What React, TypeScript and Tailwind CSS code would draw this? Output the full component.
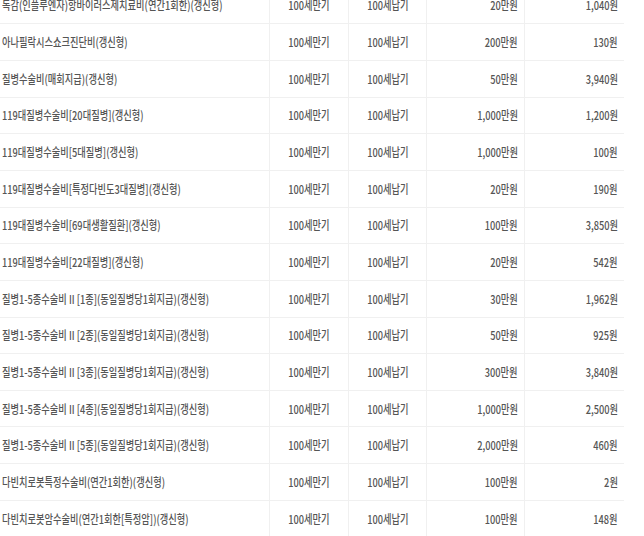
import React from "react";

type Row = [string, string, string, string, string];

const rows: Row[] = [
  ["독감(인플루엔자)항바이러스제치료비(연간1회한)(갱신형)", "100세만기", "100세납기", "20만원", "1,040원"],
  ["아나필락시스쇼크진단비(갱신형)", "100세만기", "100세납기", "200만원", "130원"],
  ["질병수술비(매회지급)(갱신형)", "100세만기", "100세납기", "50만원", "3,940원"],
  ["119대질병수술비[20대질병](갱신형)", "100세만기", "100세납기", "1,000만원", "1,200원"],
  ["119대질병수술비[5대질병](갱신형)", "100세만기", "100세납기", "1,000만원", "100원"],
  ["119대질병수술비[특정다빈도3대질병](갱신형)", "100세만기", "100세납기", "20만원", "190원"],
  ["119대질병수술비[69대생활질환](갱신형)", "100세만기", "100세납기", "100만원", "3,850원"],
  ["119대질병수술비[22대질병](갱신형)", "100세만기", "100세납기", "20만원", "542원"],
  ["질병1-5종수술비 II [1종](동일질병당1회지급)(갱신형)", "100세만기", "100세납기", "30만원", "1,962원"],
  ["질병1-5종수술비 II [2종](동일질병당1회지급)(갱신형)", "100세만기", "100세납기", "50만원", "925원"],
  ["질병1-5종수술비 II [3종](동일질병당1회지급)(갱신형)", "100세만기", "100세납기", "300만원", "3,840원"],
  ["질병1-5종수술비 II [4종](동일질병당1회지급)(갱신형)", "100세만기", "100세납기", "1,000만원", "2,500원"],
  ["질병1-5종수술비 II [5종](동일질병당1회지급)(갱신형)", "100세만기", "100세납기", "2,000만원", "460원"],
  ["다빈치로봇특정수술비(연간1회한)(갱신형)", "100세만기", "100세납기", "100만원", "2원"],
  ["다빈치로봇암수술비(연간1회한[특정암])(갱신형)", "100세만기", "100세납기", "100만원", "148원"],
];

export default function App() {
  return (
    <div className="w-[644px] h-[536px] overflow-hidden bg-white">
      <div
        className="w-[624px] -mt-[12.4px] flex flex-col text-[12px] leading-none font-medium text-[#555]"
        style={{ fontFamily: '"Noto Sans CJK KR", "Noto Sans", sans-serif' }}
      >
        {rows.map((r, i) => (
          <div
            key={i}
            className="grid grid-cols-[270px_79px_78px_98px_99px] h-[36.667px] border-b border-[#f0f0f0]"
          >
            <div className="flex items-center pl-[2px] border-r border-[#f0f0f0] min-w-0">
              <span className="inline-block whitespace-nowrap origin-left scale-x-[0.77]">{r[0]}</span>
            </div>
            <div className="flex items-center justify-center border-r border-[#f0f0f0]">
              <span className="inline-block whitespace-nowrap origin-center scale-x-[0.77]">{r[1]}</span>
            </div>
            <div className="flex items-center justify-center border-r border-[#f0f0f0]">
              <span className="inline-block whitespace-nowrap origin-center scale-x-[0.77]">{r[2]}</span>
            </div>
            <div className="flex items-center justify-end pr-[6px] border-r border-[#f0f0f0]">
              <span className="inline-block whitespace-nowrap origin-right scale-x-[0.77]">{r[3]}</span>
            </div>
            <div className="flex items-center justify-end pr-[6px]">
              <span className="inline-block whitespace-nowrap origin-right scale-x-[0.77]">{r[4]}</span>
            </div>
          </div>
        ))}
      </div>
    </div>
  );
}
